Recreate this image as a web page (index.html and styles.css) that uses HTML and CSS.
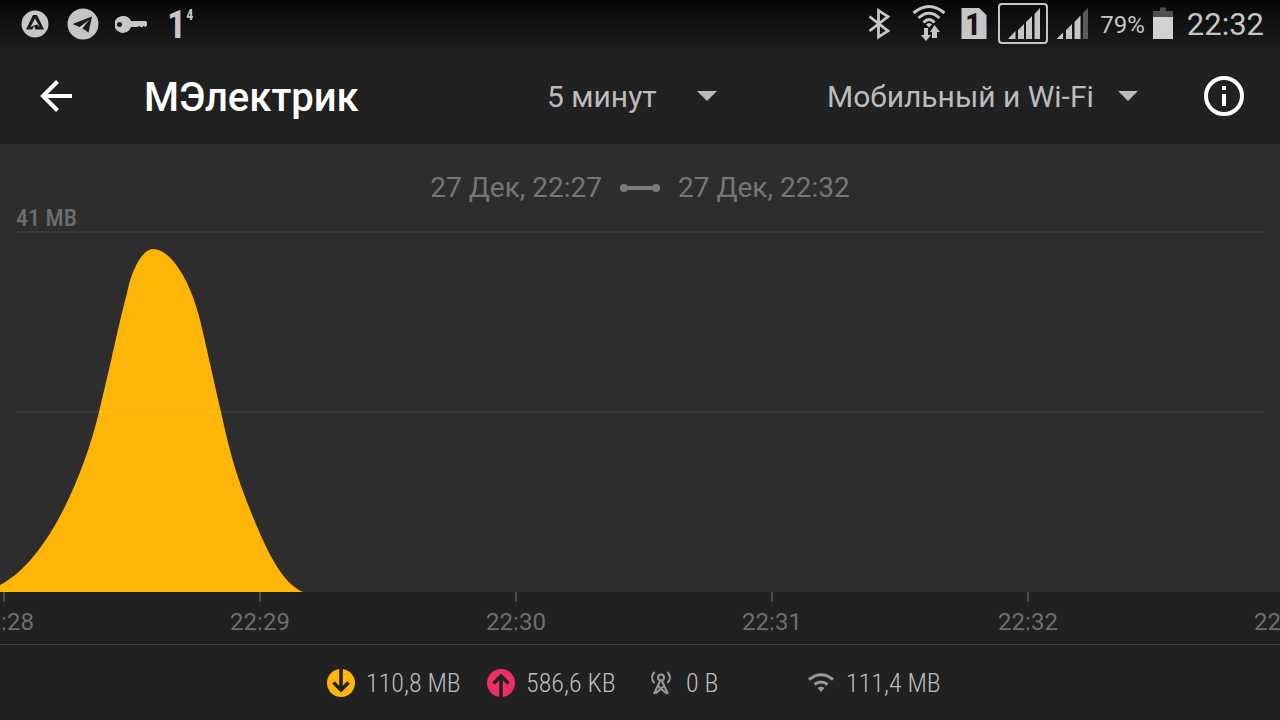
FILE: index.html
```html
<!DOCTYPE html>
<html lang="ru">

<head>
    <meta charset="utf-8">
    <title>МЭлектрик</title>
    <link rel="stylesheet" href="styles.css">
</head>

<body>
    <div class="status-bar">
        <div class="status-left">
            <svg width="32" height="48" viewBox="0 0 32 48">
                <circle cx="16" cy="24" r="13.5" fill="#c6c6c6"/>
                <path d="M14 15H18L25 29.500H16.500L15 25.500 18.500 24.500 19.500 26.500H20.500L16 18.500 11.500 27 15 25.500 13.500 29.500H7Z" fill="#1a1a1a"/>
            </svg>
            <svg width="32" height="48" viewBox="0 0 32 48">
                <circle cx="16" cy="24" r="15.5" fill="#c6c6c6"/>
                <path d="M5.500 24L25 16.500 21.500 32.500 15.500 28.500 22 20 12.500 27Z" fill="#1a1a1a"/>
            </svg>
            <svg width="32" height="48" viewBox="0 0 32 48">
                <path d="M8.500 16a8.500 8.500 0 0 1 7.500 5H31L33 24 30.500 27 28.500 26 26.500 27.500 24.500 26 22.500 27H16A8.500 8.500 0 1 1 8.500 16Z" fill="#c6c6c6"/>
                <circle cx="4.500" cy="24.500" r="2.500" fill="#1a1a1a"/>
            </svg>
            <span class="badge">1<sup>4</sup></span>
        </div>
        <div class="status-right">
            <svg width="44" height="48" viewBox="0 0 44 48">
                <path d="M12.500 16.500L31 31 21.500 37V10.500L31 16.500 12.500 31" fill="none" stroke="#c6c6c6" stroke-width="2.800"/>
            </svg>
            <svg width="40" height="48" viewBox="0 0 40 48">
                <g fill="none" stroke="#c6c6c6" stroke-width="3">
                    <path d="M4.500 13Q20 0 35.500 13"/>
                    <path d="M9.500 18Q20 8.500 30.500 18"/>
                    <path d="M14.500 22.500Q20 16.500 25.500 22.500"/>
                </g>
                <path d="M17 24.500Q20 21.500 23 24.500L20 27.500Z" fill="#c6c6c6"/>
                <path d="M15 28h4v7h3l-5 6-5-6h3zM23 38h5v-6h3l-5.500-7-4.500 7h2z" fill="#c6c6c6"/>
            </svg>
            <svg width="33" height="48" viewBox="0 0 33 48">
                <path d="M4.500 8H22L29.500 15V39H4.500Z" fill="#c6c6c6"/>
                <text x="16" y="35" text-anchor="middle" class="sim-number">1</text>
            </svg>
            <svg width="50" height="48" viewBox="0 0 50 48">
                <rect x="1" y="4" width="48" height="39" rx="3" fill="none" stroke="#c6c6c6" stroke-width="2"/>
                <path d="M10 39L17.500 31V39ZM20 39V30L26 24V39ZM28 39V22L34 16V39ZM36.500 39V14L42 8V39Z" fill="#c6c6c6"/>
            </svg>
            <svg width="36" height="48" viewBox="0 0 36 48">
                <path d="M0.500 39L7 32.500V39ZM10 39V30L16 24V39ZM18.500 39V22L24.500 15.500V39Z" fill="#c6c6c6"/>
                <path d="M27 39V13L32 8V39Z" fill="#5a5a5a"/>
            </svg>
            <span class="battery-level">79%</span>
            <svg width="20" height="48" viewBox="0 0 20 48">
                <path d="M0 17V11H7V7.500H13V11H20V17Z" fill="#505050"/>
                <path d="M0 17H20V39H0Z" fill="#d2d2d2"/>
            </svg>
            <span class="clock">22:32</span>
        </div>
    </div>

    <header class="toolbar">
        <button class="icon-button" aria-label="Назад">
            <svg width="48" height="48" viewBox="0 0 48 48" fill="none" stroke="#fff" stroke-width="4">
                <path d="M40 24H12M25.500 9.500L11 24 25.500 38.500"/>
            </svg>
        </button>
        <h1>МЭлектрик</h1>
        <div class="picker period">
            <select aria-label="Период">
                <option>5 минут</option>
            </select>
            <svg width="20" height="10" viewBox="0 0 20 10"><path d="M0 0H20L10 10Z" fill="#bcbcbc"/></svg>
        </div>
        <div class="picker network">
            <select aria-label="Сеть">
                <option>Мобильный и Wi-Fi</option>
            </select>
            <svg width="20" height="10" viewBox="0 0 20 10"><path d="M0 0H20L10 10Z" fill="#bcbcbc"/></svg>
        </div>
        <button class="icon-button" aria-label="Информация">
            <svg width="48" height="48" viewBox="0 0 48 48">
                <circle cx="24" cy="24" r="18" fill="none" stroke="#fff" stroke-width="4"/>
                <path d="M22 14H26V18H22ZM22 22H26V34H22Z" fill="#fff"/>
            </svg>
        </button>
    </header>

    <main>
        <section class="chart">
            <div class="range">
                <span>27 Дек, 22:27</span>
                <svg width="40" height="8" viewBox="0 0 40 8" fill="#7c7c7c">
                    <circle cx="4" cy="4" r="4"/>
                    <circle cx="36" cy="4" r="4"/>
                    <path d="M4 2H36V6H4Z"/>
                </svg>
                <span>27 Дек, 22:32</span>
            </div>
            <div class="max-value">41 MB</div>
            <svg class="plot" viewBox="0 0 1280 360" preserveAspectRatio="none">
                <path d="M0 360V353C45 330 82 250 99 180C112 127 118 95 127 61C132 36 143 17 153 17C170 17 189 46 199 84C206 112 213 146 221 180C228 212 234 237 247 270C262 308 279 350 303 360Z" fill="#ffb507"/>
                <path d="M16 0H1264M16 180H1264" stroke="#fff" stroke-opacity="0.06" stroke-width="2"/>
            </svg>
        </section>

        <ul class="axis">
            <li>22:28</li>
            <li>22:29</li>
            <li>22:30</li>
            <li>22:31</li>
            <li>22:32</li>
            <li>22:33</li>
        </ul>
    </main>

    <footer>
        <div class="totals">
            <div class="total">
                <svg width="30" height="30" viewBox="0 0 30 30">
                    <circle cx="15" cy="15" r="14" fill="#ffb507"/>
                    <path d="M15 0V22M7.500 14.500L15 22 22.500 14.500" fill="none" stroke="#212121" stroke-width="3.500"/>
                </svg>
                <span>110,8 MB</span>
            </div>
            <div class="total">
                <svg width="30" height="30" viewBox="0 0 30 30">
                    <circle cx="15" cy="15" r="14" fill="#ec2f66"/>
                    <path d="M15 30V8M7.500 15.500L15 8 22.500 15.500" fill="none" stroke="#212121" stroke-width="3.500"/>
                </svg>
                <span>586,6 KB</span>
            </div>
            <div class="total">
                <svg width="30" height="30" viewBox="0 0 30 30" fill="none" stroke="#999" stroke-width="2">
                    <circle cx="15" cy="9.500" r="3"/>
                    <path d="M8.500 4Q3.500 9.500 8.500 15M21.500 4Q26.500 9.500 21.500 15"/>
                    <path d="M14 13L8 26M16 13L22 26M12 18L20.500 25.500M18 18L9.500 25.500"/>
                </svg>
                <span>0 B</span>
            </div>
            <div class="total">
                <svg width="30" height="30" viewBox="0 0 30 30" fill="none" stroke="#999" stroke-width="3">
                    <path d="M3 11.500Q15 2 27 11.500M8.500 16.500Q15 11.500 21.500 16.500"/>
                    <path d="M11.500 20Q15 17.500 18.500 20L15 24Z" fill="#999" stroke="none"/>
                </svg>
                <span>111,4 MB</span>
            </div>
        </div>
    </footer>
</body>

</html>
```
FILE: styles.css
```css
body {
    margin: 0;
    min-height: 100vh;
    display: flex;
    flex-direction: column;
    background-color: #212121;
    color: #bcbcbc;
    font-family: Roboto, "Liberation Sans", sans-serif;
    overflow-x: hidden;
}

svg {
    display: block;
    flex-shrink: 0;
}

.status-bar {
    display: flex;
    justify-content: space-between;
    height: 48px;
    padding: 0 16px 0 19px;
    line-height: 48px;
    color: #c6c6c6;
    background: linear-gradient(#070707, #1c1c1c);
}

.status-left,
.status-right {
    display: flex;
}

.status-left {
    gap: 16px;
}

.status-right {
    gap: 8px;
}

.badge {
    display: flex;
    padding-left: 4px;
    font-family: "Roboto Condensed", Roboto, sans-serif;
    font-size: 38px;
    font-weight: 700;
    line-height: 50px;
}

.badge sup {
    font-size: 14px;
    line-height: 30px;
}

.sim-number {
    font-family: "Roboto Condensed", Roboto, sans-serif;
    font-size: 32px;
    font-weight: 700;
    fill: #151515;
}

.battery-level {
    font-size: 24px;
    line-height: 50px;
}

.clock {
    margin-left: 6px;
    font-size: 31px;
    line-height: 50px;
}

.toolbar {
    display: flex;
    align-items: center;
    height: 96px;
    padding: 0 32px;
}

.icon-button {
    padding: 0;
    border: none;
    background: none;
    cursor: pointer;
}

h1 {
    flex: 1;
    margin: 0 0 0 64px;
    padding-top: 2px;
    font-size: 40px;
    font-weight: 500;
    color: #fff;
}

.picker {
    display: flex;
    align-items: center;
}

.picker select {
    appearance: none;
    padding: 0;
    border: none;
    background: none;
    color: #bcbcbc;
    font-family: inherit;
    font-size: 30px;
    cursor: pointer;
}

.period {
    gap: 40px;
    margin-right: 110px;
}

.network {
    gap: 24px;
    margin-right: 62px;
}

main {
    flex: 1;
    display: flex;
    flex-direction: column;
}

.chart {
    flex: 1;
    display: flex;
    flex-direction: column;
    padding-top: 28px;
    background-color: #2d2d2d;
}

.range {
    display: flex;
    justify-content: center;
    align-items: center;
    gap: 18px;
    font-size: 28px;
    line-height: 32px;
    color: #767676;
}

.max-value {
    padding-left: 16px;
    font-family: "Roboto Condensed", "Liberation Sans Narrow", Roboto, sans-serif;
    font-size: 24px;
    font-weight: 500;
    line-height: 28px;
    color: #6c6c6c;
}

.plot {
    flex: 1;
    width: 100%;
    min-height: 360px;
    overflow: visible;
}

.axis {
    display: flex;
    margin: 0;
    padding: 0 0 2px;
    list-style: none;
    overflow: hidden;
    border-bottom: 1px solid #3f3f3f;
}

.axis li {
    flex: 0 0 20%;
    font-size: 24px;
    line-height: 40px;
    text-align: center;
    color: #6e6e6e;
}

/* first tick sits at the left edge, its label is cut in half */
.axis li:first-child {
    margin-left: calc(4px - 10%);
}

.axis li::before {
    content: "";
    display: block;
    width: 2px;
    height: 10px;
    margin: 0 auto;
    background-color: #4a4a4a;
}

.totals {
    display: grid;
    grid-template-columns: repeat(4, 160px);
    justify-content: center;
    padding-left: 12px;
}

.total {
    display: flex;
    align-items: center;
    gap: 10px;
    height: 75px;
    font-family: "Roboto Condensed", "Liberation Sans Narrow", Roboto, sans-serif;
    font-size: 26px;
    font-weight: 300;
    white-space: nowrap;
}
```
